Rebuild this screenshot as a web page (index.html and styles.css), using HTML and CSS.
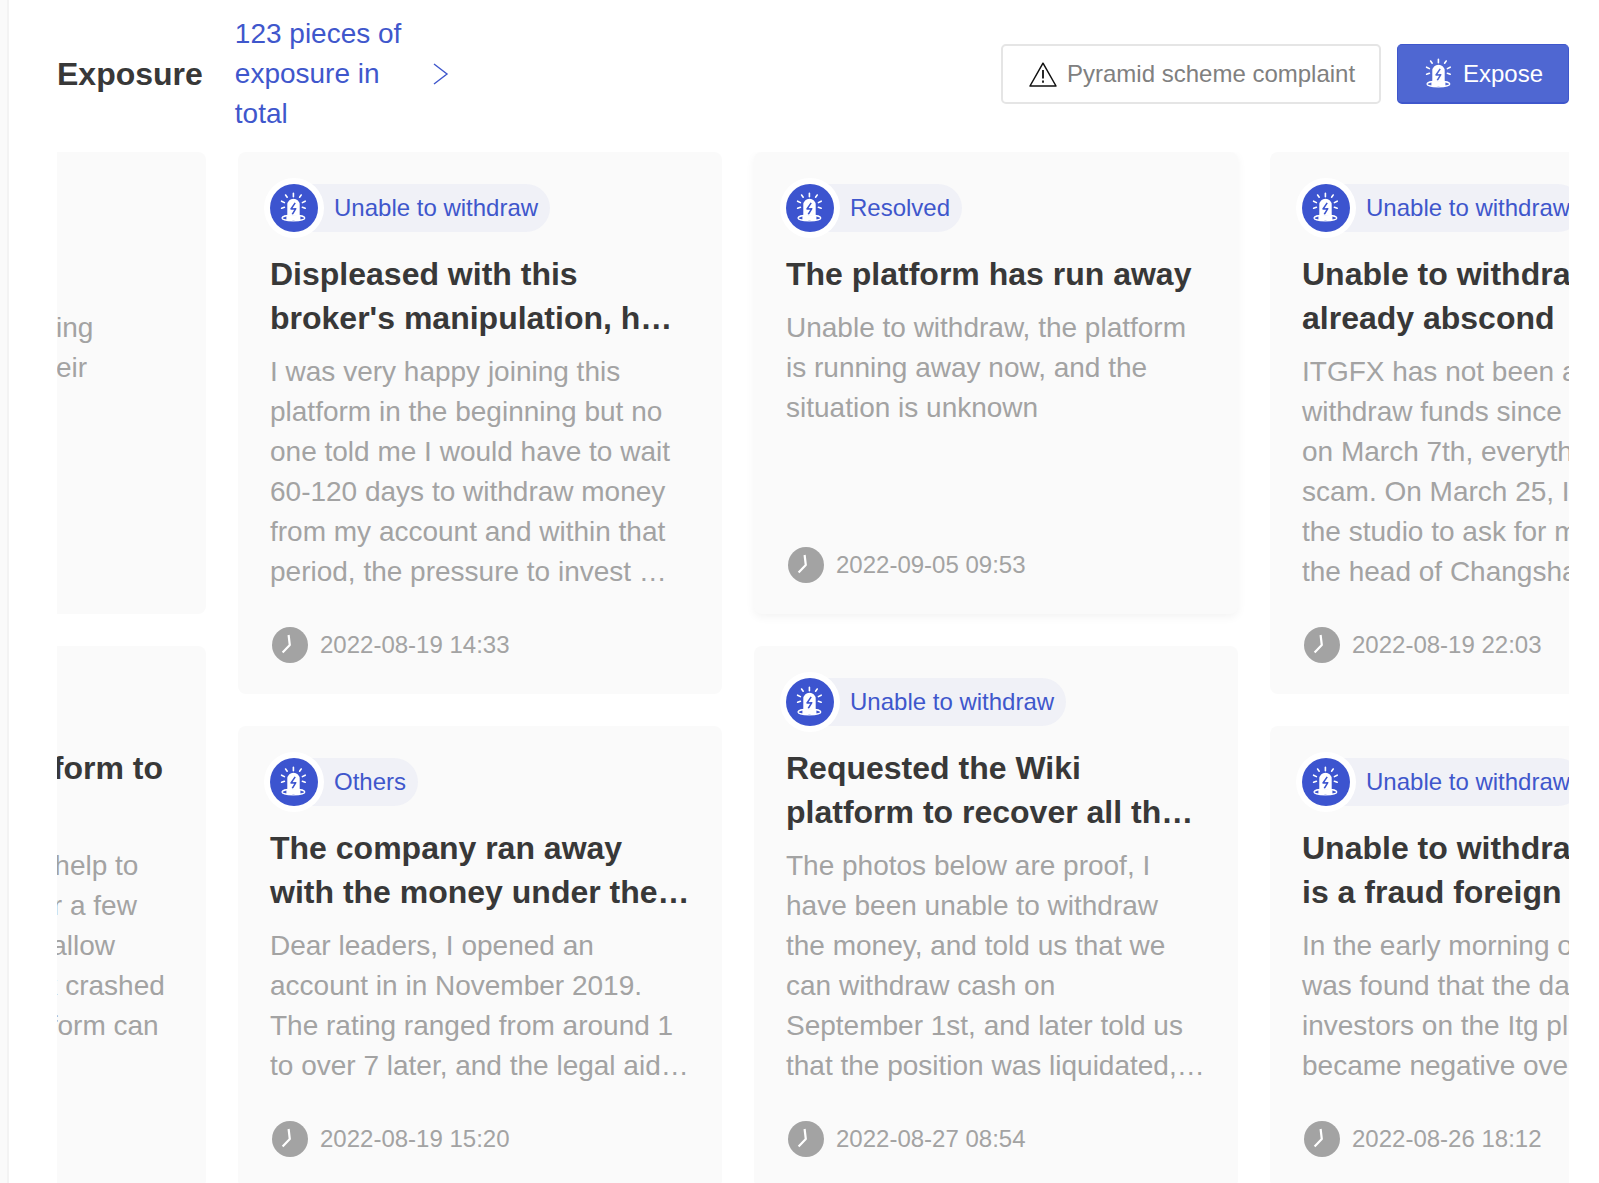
FILE: index.html
```html
<!DOCTYPE html>
<html lang="en">
<head>
<meta charset="utf-8">
<title>Exposure</title>
<link rel="stylesheet" href="styles.css">
</head>
<body>
<svg class="defs" width="0" height="0" aria-hidden="true">
  <symbol id="alarm" viewBox="0 0 48 48">
    <path d="M17.3 31.6V21a6.2 6.2 0 0 1 12.4 0v10.6z" fill="#fff"/>
    <path d="M25.2 18.8l-4.2 6.2 4.8-.3-3.6 5.8" fill="none" stroke="currentColor" stroke-width="1.5" stroke-linejoin="round"/>
    <ellipse cx="23.4" cy="34" rx="11.4" ry="2.8" fill="none" stroke="#fff" stroke-width="1.3"/>
    <path d="M16.4 31.4h14v4.6h-14z" fill="#fff"/>
    <g stroke="#fff" stroke-width="1.6" stroke-linecap="round" fill="none">
      <path d="M23.4 9.4v3.4"/>
      <path d="M15.6 11l1.6 2.2"/>
      <path d="M31.2 11l-1.6 2.2"/>
      <path d="M11.6 17.2l2.8 1.4"/>
      <path d="M35.2 17.2l-2.8 1.4"/>
      <path d="M11.6 24.2l2.8-1"/>
      <path d="M35.2 24.2l-2.8-1"/>
    </g>
  </symbol>
  <symbol id="clock" viewBox="0 0 36 36">
    <circle cx="18" cy="18" r="18" fill="#a3a3a3"/>
    <path d="M16.6 8l1.2 10-7.2 7.4" fill="none" stroke="#fff" stroke-width="2.2" stroke-linejoin="round"/>
  </symbol>
</svg>
<div class="page">
  <div class="rail"></div>
  <main class="main">
    <header class="head">
      <h1 class="head-title">Exposure</h1>
      <a class="head-link">
        <span class="head-link-text">123 pieces of exposure in total</span>
        <svg class="chevron" width="16" height="22" viewBox="0 0 16 22"><path d="M1 1l13 10L1 21" fill="none" stroke="#3f57cc" stroke-width="1.4"/></svg>
      </a>
      <div class="head-actions">
        <button class="btn btn-plain">
          <svg class="btn-warn" width="28" height="25" viewBox="0 0 28 25">
            <path d="M14 1.2L1 24h26z" fill="none" stroke="#111" stroke-width="1.5" stroke-linejoin="round"/>
            <path d="M14 8v8.5M14 18.6v2.2" fill="none" stroke="#111" stroke-width="1.8"/>
          </svg>
          <span>Pyramid scheme complaint</span>
        </button>
        <button class="btn btn-primary">
          <svg class="btn-alarm"><use href="#alarm"/></svg>
          <span>Expose</span>
        </button>
      </div>
    </header>

    <div class="board">
      <div class="board-track">
        <div class="col">
          <article class="card card-tall">
            <div class="tag"><svg class="tag-icon"><use href="#alarm"/></svg><span class="tag-text">Others</span></div>
            <h2 class="card-title">Platform fraud</h2>
            <p class="card-body">It just kept delaying funding<br>Many clients still want their<br>money back.</p>
            <div class="card-date"><svg class="clock"><use href="#clock"/></svg>2022-09-01 10:12</div>
          </article>
          <article class="card">
            <div class="tag"><svg class="tag-icon"><use href="#alarm"/></svg><span class="tag-text">Others</span></div>
            <h2 class="card-title">Please help the platform to<br>refund</h2>
            <p class="card-body">I hope Wikifx can kindly help to<br>I have actually waited for a few<br>days yet it still does not allow<br>withdrawals, and my link crashed<br>I hope that this new platform can<br>be fair.</p>
            <div class="card-date"><svg class="clock"><use href="#clock"/></svg>2022-08-25 11:40</div>
          </article>
        </div>

        <div class="col">
          <article class="card">
            <div class="tag"><svg class="tag-icon"><use href="#alarm"/></svg><span class="tag-text">Unable to withdraw</span></div>
            <h2 class="card-title">Displeased with this broker's manipulation, h…</h2>
            <p class="card-body">I was very happy joining this platform in the beginning but no one told me I would have to wait 60-120 days to withdraw money from my account and within that period, the pressure to invest …</p>
            <div class="card-date"><svg class="clock"><use href="#clock"/></svg>2022-08-19 14:33</div>
          </article>
          <article class="card">
            <div class="tag"><svg class="tag-icon"><use href="#alarm"/></svg><span class="tag-text">Others</span></div>
            <h2 class="card-title">The company ran away with the money under the…</h2>
            <p class="card-body">Dear leaders, I opened an account in in November 2019. The rating ranged from around 1 to over 7 later, and the legal aid…</p>
            <div class="card-date"><svg class="clock"><use href="#clock"/></svg>2022-08-19 15:20</div>
          </article>
        </div>

        <div class="col">
          <article class="card card-tall card-hover">
            <div class="tag"><svg class="tag-icon"><use href="#alarm"/></svg><span class="tag-text">Resolved</span></div>
            <h2 class="card-title">The platform has run away</h2>
            <p class="card-body">Unable to withdraw, the platform is running away now, and the situation is unknown</p>
            <div class="card-date"><svg class="clock"><use href="#clock"/></svg>2022-09-05 09:53</div>
          </article>
          <article class="card">
            <div class="tag"><svg class="tag-icon"><use href="#alarm"/></svg><span class="tag-text">Unable to withdraw</span></div>
            <h2 class="card-title">Requested the Wiki platform to recover all th…</h2>
            <p class="card-body">The photos below are proof, I<br>have been unable to withdraw<br>the money, and told us that we<br>can withdraw cash on<br>September 1st, and later told us<br>that the position was liquidated,…</p>
            <div class="card-date"><svg class="clock"><use href="#clock"/></svg>2022-08-27 08:54</div>
          </article>
        </div>

        <div class="col">
          <article class="card">
            <div class="tag"><svg class="tag-icon"><use href="#alarm"/></svg><span class="tag-text">Unable to withdraw</span></div>
            <h2 class="card-title">Unable to withdraw, they<br>already abscond</h2>
            <p class="card-body">ITGFX has not been able to<br>withdraw funds since March,<br>on March 7th, everything is a<br>scam. On March 25, I went to<br>the studio to ask for money,<br>the head of Changsha said</p>
            <div class="card-date"><svg class="clock"><use href="#clock"/></svg>2022-08-19 22:03</div>
          </article>
          <article class="card">
            <div class="tag"><svg class="tag-icon"><use href="#alarm"/></svg><span class="tag-text">Unable to withdraw</span></div>
            <h2 class="card-title">Unable to withdraw, this<br>is a fraud foreign</h2>
            <p class="card-body">In the early morning of that<br>was found that the data of<br>investors on the Itg platform<br>became negative overnight</p>
            <div class="card-date"><svg class="clock"><use href="#clock"/></svg>2022-08-26 18:12</div>
          </article>
        </div>
      </div>
    </div>
  </main>
</div>
</body>
</html>
```

FILE: styles.css
```css
* { box-sizing: border-box; }

html, body {
  margin: 0;
  height: 1183px;
  overflow: hidden;
  background: #fff;
  font-family: "Liberation Sans", Arial, sans-serif;
}

.defs { position: absolute; }

.page {
  display: flex;
  height: 1183px;
  overflow: hidden;
}

.rail {
  flex: none;
  width: 9px;
  background: #fafafa;
  border-right: 2px solid #f3f3f3;
}

.main {
  flex: 1;
  min-width: 0;
  padding: 14px 30px 0 48px;
}

.head {
  display: flex;
  align-items: center;
  height: 120px;
  margin-bottom: 18px;
}

.head-title {
  flex: none;
  margin: 0 32px 0 0;
  font-size: 32px;
  line-height: 44px;
  font-weight: 700;
  color: #383838;
}

.head-link {
  display: flex;
  align-items: center;
  gap: 18px;
  color: #3f57cc;
  font-size: 28px;
  line-height: 40px;
}

.head-link-text { width: 180px; }

.chevron { flex: none; }

.head-actions {
  display: flex;
  gap: 16px;
  margin-left: auto;
}

.btn {
  display: flex;
  align-items: center;
  height: 60px;
  padding: 0 26px;
  border-radius: 5px;
  font-family: inherit;
  font-size: 24px;
  white-space: nowrap;
}

.btn-plain {
  width: 380px;
  gap: 10px;
  background: #fff;
  border: 2px solid #e5e5e5;
  color: #808080;
}

.btn-warn { flex: none; }

.btn-primary {
  width: 172px;
  background: #4f67d2;
  border: 1px solid #3f57cc;
  border-bottom-width: 2px;
  color: #fff;
}

.btn-alarm {
  flex: none;
  width: 48px;
  height: 48px;
  margin-left: -9px;
  color: #4f67d2;
}

.board {
  overflow: hidden;
  height: 1031px;
}

.board-track {
  display: flex;
  gap: 32px;
  margin-left: -335px;
  width: 2000px;
}

.col {
  flex: none;
  display: flex;
  flex-direction: column;
  gap: 32px;
  width: 484px;
}

.card {
  display: flex;
  flex-direction: column;
  padding: 32px 32px 31px;
  background: #fafafa;
  border-radius: 8px;
}

.card-tall { min-height: 462px; }

.card-hover { box-shadow: 0 3px 10px rgba(0, 0, 0, .05); }

.tag {
  display: inline-flex;
  align-self: flex-start;
  align-items: center;
  flex: none;
  gap: 16px;
  height: 48px;
  padding-right: 12px;
  border-radius: 24px;
  background: #f0f1f7;
  color: #3f57cc;
  font-size: 24px;
  white-space: nowrap;
}

.tag-icon {
  flex: none;
  width: 48px;
  height: 48px;
  border-radius: 50%;
  background: #3c54cf;
  box-shadow: 0 0 0 6px #fff;
  color: #3c54cf;
}

.card-title {
  margin: 20px 0 12px;
  font-size: 32px;
  line-height: 44px;
  font-weight: 700;
  color: #383838;
}

.card-body {
  margin: 0 0 35px;
  font-size: 28px;
  line-height: 40px;
  color: #a3a3a3;
}

.card-date {
  display: flex;
  align-items: center;
  gap: 12px;
  height: 36px;
  margin-top: auto;
  padding-left: 2px;
  font-size: 24px;
  color: #a3a3a3;
}

.clock {
  flex: none;
  width: 36px;
  height: 36px;
}
```
